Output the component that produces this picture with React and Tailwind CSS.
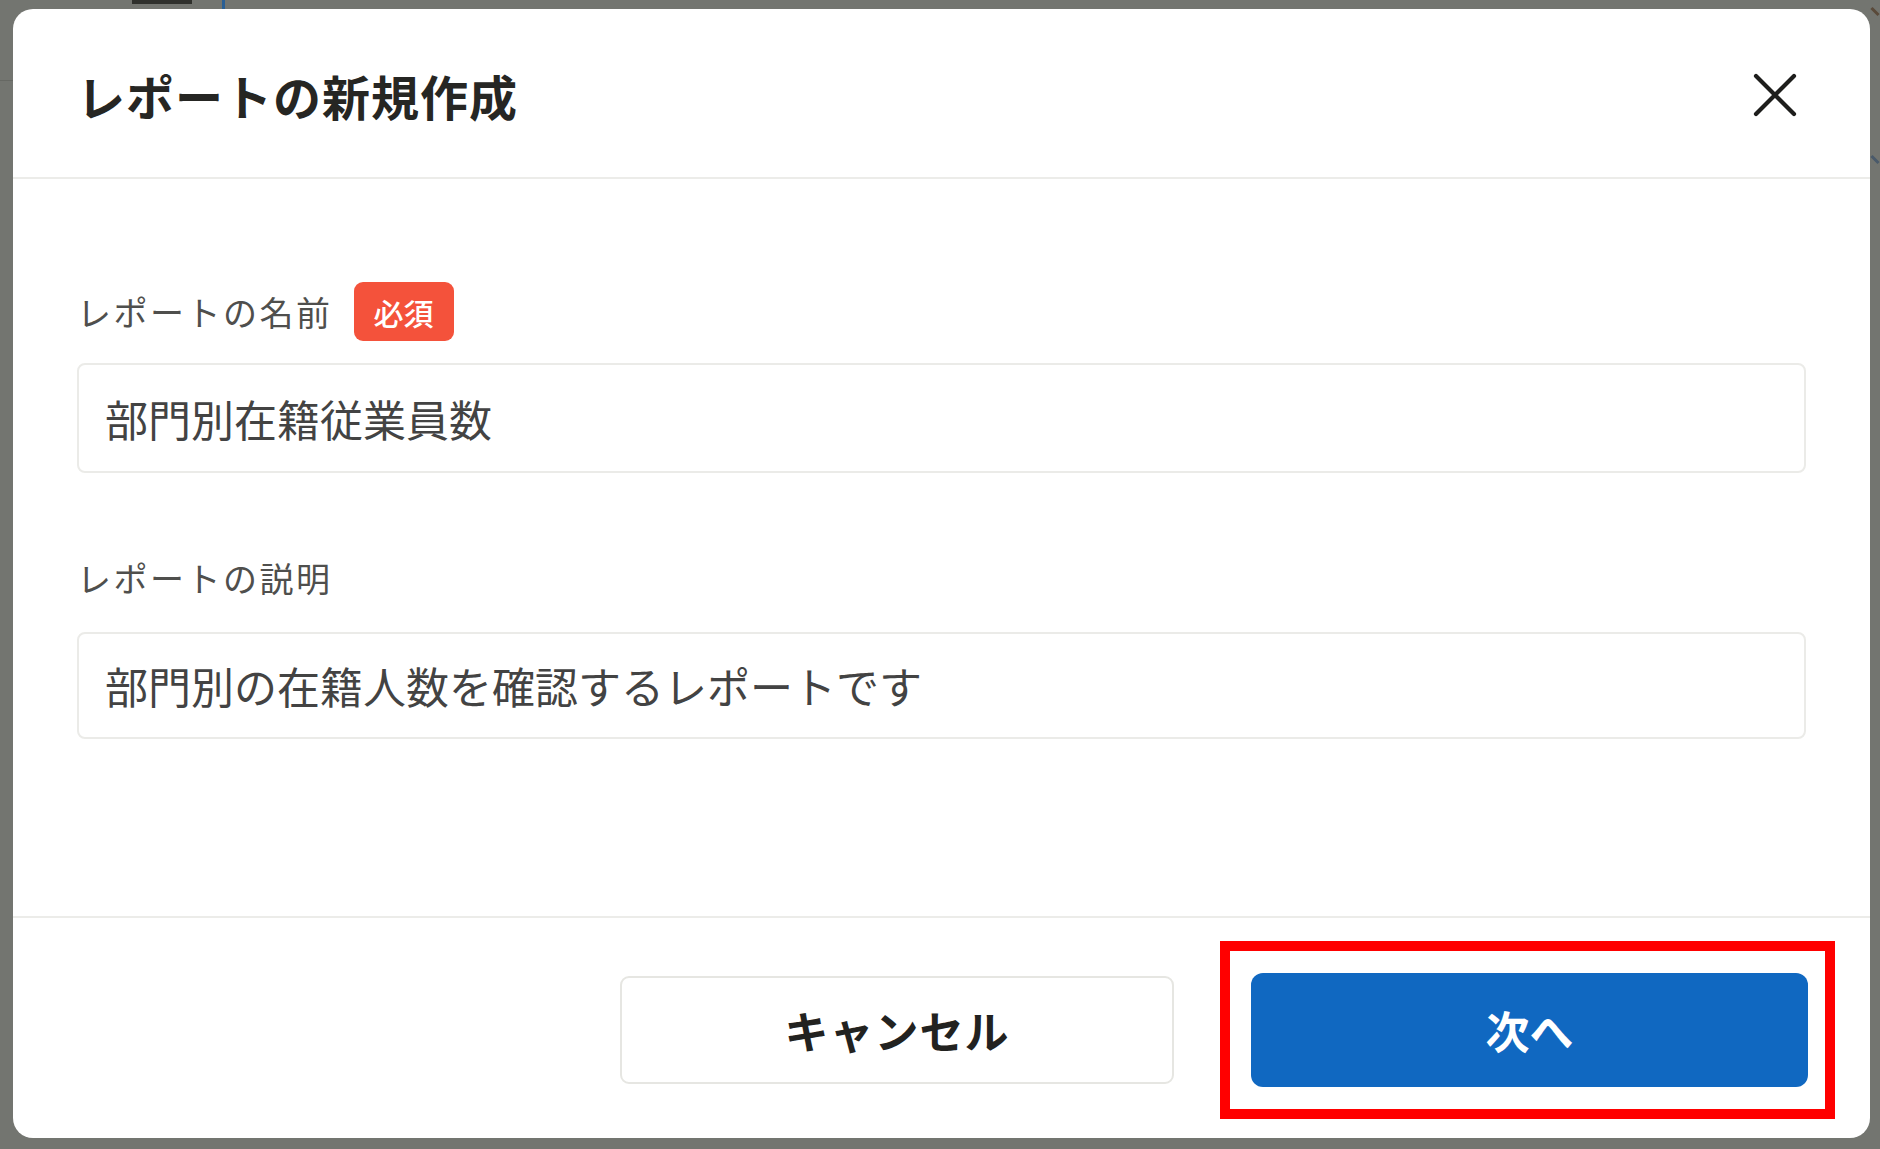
import React from "react";

const FONT = { fontFamily: '"Noto Sans CJK JP", "Noto Sans", sans-serif' };

export default function App() {
  return (
    <div
      className="relative w-[1880px] h-[1149px] overflow-hidden bg-[#737570] pt-[9px] pl-[13px]"
      style={FONT}
    >
      {/* faint bits of the page beneath the overlay */}
      <div className="absolute left-[132px] top-0 w-[60px] h-[4px] bg-[#2f302c]" />
      <div className="absolute left-[222px] top-0 w-[3px] h-[9px] bg-[#2a5f95]" />
      <div className="absolute left-0 top-[80px] w-[13px] h-px bg-[#666863]" />
      <div className="absolute right-0 top-[10px] w-[10px] h-[3px] rotate-45 bg-[#5a4a3a]" />
      <div className="absolute right-0 top-[158px] w-[10px] h-[3px] rotate-45 bg-[#4a5a6a]" />

      <div className="w-[1857px] h-[1129px] bg-white rounded-[20px] flex flex-col overflow-hidden">
        {/* header */}
        <div className="h-[170px] shrink-0 border-b-2 border-[#ecece9] flex items-center justify-between pl-[64px] pr-[73px] pt-[4px]">
          <h1 className="text-[48px] leading-none font-bold tracking-[1px] text-[#262623]">
            レポートの新規作成
          </h1>
          <button className="w-[44px] h-[44px] flex items-center justify-center text-[#1e1e1c]">
            <svg width="44" height="44" viewBox="0 0 44 44" fill="none">
              <path
                d="M3 3 L41 41 M41 3 L3 41"
                stroke="currentColor"
                strokeWidth="4.2"
                strokeLinecap="round"
              />
            </svg>
          </button>
        </div>

        {/* body */}
        <div className="flex-1 px-[64px] pt-[103px]">
          <div className="flex items-center h-[59px]">
            <span className="text-[34px] leading-none tracking-[2.5px] text-[#4f4f4d]">
              レポートの名前
            </span>
            <span className="ml-[21px] h-[59px] w-[100px] rounded-[9px] bg-[#f4523b] text-white text-[30px] leading-none font-medium flex items-center justify-center">
              必須
            </span>
          </div>
          <div className="mt-[22px] h-[110px] border-2 border-[#ebebe8] rounded-[8px] flex items-center pl-[26px]">
            <span className="text-[43px] leading-none text-[#434343]">部門別在籍従業員数</span>
          </div>

          <div className="mt-[75px] flex items-center h-[59px]">
            <span className="text-[34px] leading-none tracking-[2.5px] text-[#4f4f4d]">
              レポートの説明
            </span>
          </div>
          <div className="mt-[25px] h-[107px] border-2 border-[#ebebe8] rounded-[8px] flex items-center pl-[26px]">
            <span className="text-[43px] leading-none text-[#434343]">
              部門別の在籍人数を確認するレポートです
            </span>
          </div>
        </div>

        {/* footer */}
        <div className="h-[222px] shrink-0 border-t-2 border-[#ecece9] flex items-center justify-end pr-[62px] pt-[3px]">
          <button className="w-[554px] h-[108px] border-2 border-[#e6e6e2] rounded-[9px] bg-white flex items-center justify-center text-[44px] leading-none font-bold tracking-[1px] text-[#222220]">
            キャンセル
          </button>
          <div className="relative ml-[77px]">
            <button className="w-[557px] h-[114px] rounded-[12px] bg-[#1068c1] flex items-center justify-center text-[44px] leading-none font-bold text-white">
              次へ
            </button>
            <div className="absolute -left-[31px] -right-[27px] -top-[32px] -bottom-[32px] border-[10px] border-[#ff0000] pointer-events-none" />
          </div>
        </div>
      </div>
    </div>
  );
}
